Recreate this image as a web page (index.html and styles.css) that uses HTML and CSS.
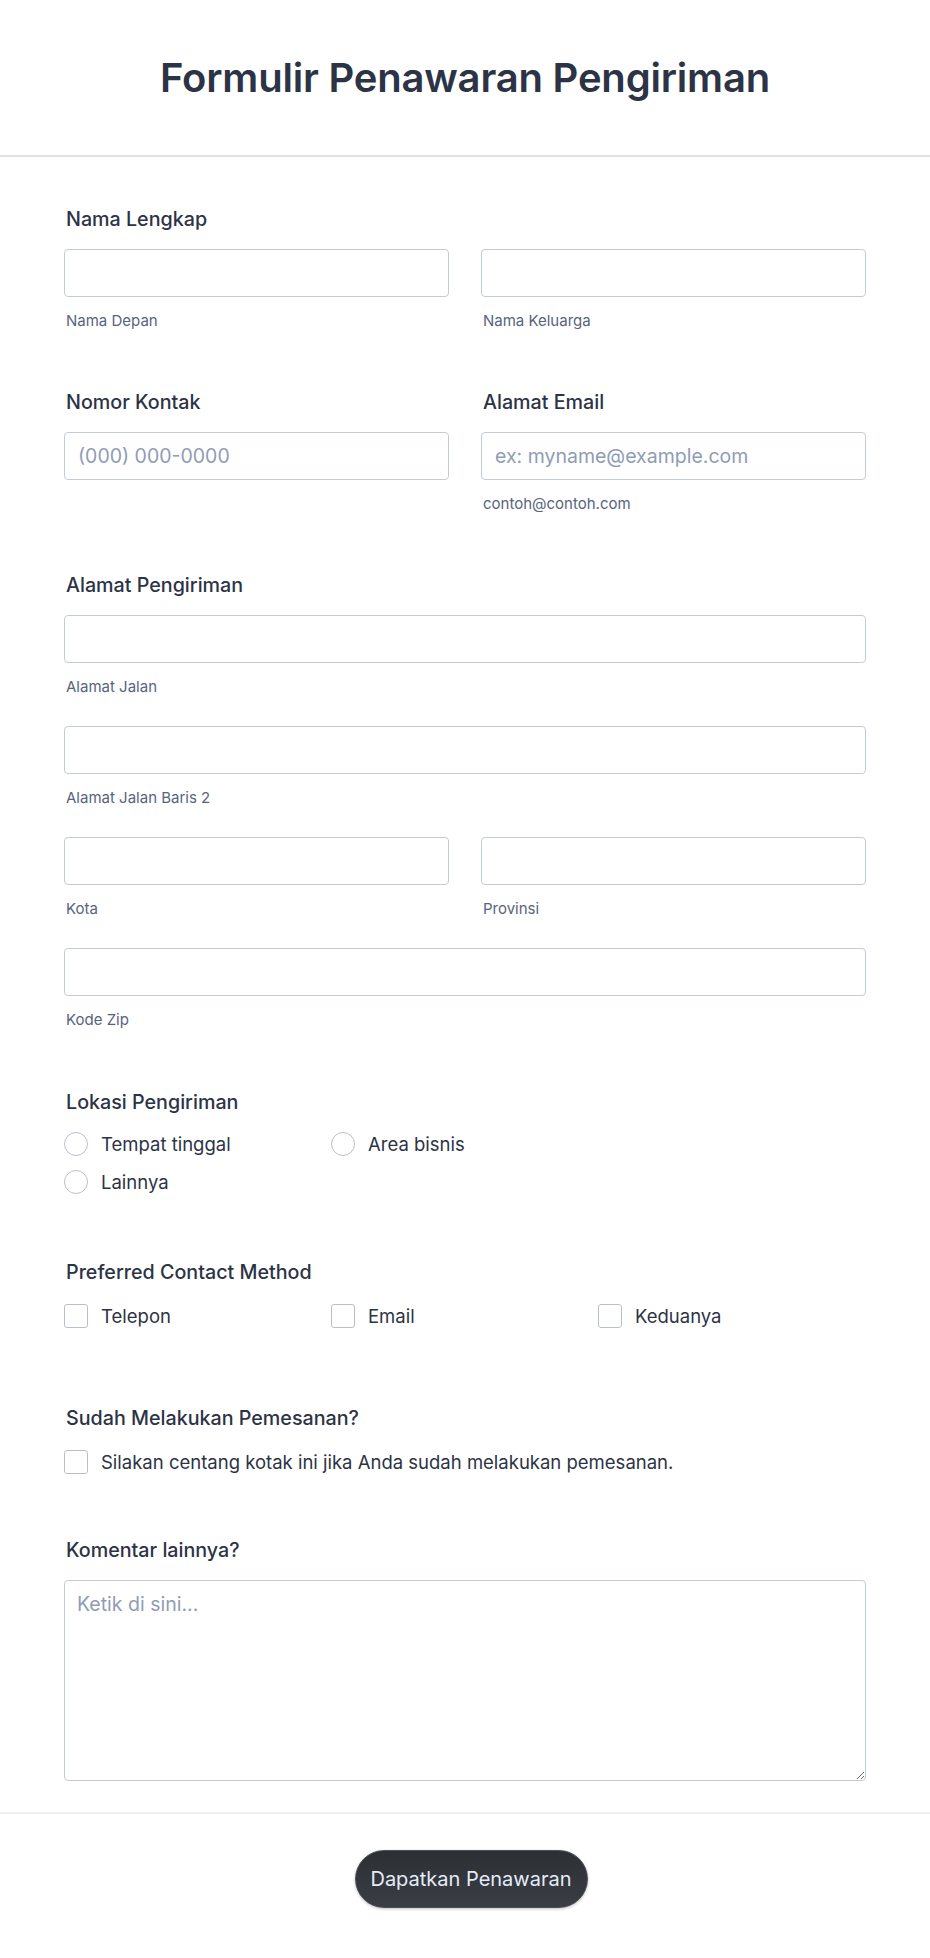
FILE: index.html
```html
<!DOCTYPE html>
<html lang="id">
<head>
<meta charset="utf-8">
<title>Formulir Penawaran Pengiriman</title>
<link rel="stylesheet" href="styles.css">
</head>
<body>
<header class="header">
  <h1 class="title">Formulir Penawaran Pengiriman</h1>
</header>
<form class="form">
  <div class="field">
    <div class="label">Nama Lengkap</div>
    <div class="cols">
      <div class="col">
        <input class="input" type="text">
        <div class="sublabel">Nama Depan</div>
      </div>
      <div class="col">
        <input class="input" type="text">
        <div class="sublabel">Nama Keluarga</div>
      </div>
    </div>
  </div>

  <div class="field gap-59">
    <div class="cols">
      <div class="col">
        <div class="label">Nomor Kontak</div>
        <input class="input" type="text" placeholder="(000) 000-0000">
      </div>
      <div class="col">
        <div class="label">Alamat Email</div>
        <input class="input" type="text" placeholder="ex: myname@example.com">
        <div class="sublabel">contoh@contoh.com</div>
      </div>
    </div>
  </div>

  <div class="field gap-59">
    <div class="label">Alamat Pengiriman</div>
    <input class="input" type="text">
    <div class="sublabel">Alamat Jalan</div>
    <input class="input next" type="text">
    <div class="sublabel">Alamat Jalan Baris 2</div>
    <div class="cols next">
      <div class="col">
        <input class="input" type="text">
        <div class="sublabel">Kota</div>
      </div>
      <div class="col">
        <input class="input" type="text">
        <div class="sublabel">Provinsi</div>
      </div>
    </div>
    <input class="input next" type="text">
    <div class="sublabel">Kode Zip</div>
  </div>

  <div class="field gap-60">
    <div class="label">Lokasi Pengiriman</div>
    <div class="options two">
      <label class="option"><span class="radio"></span>Tempat tinggal</label>
      <label class="option"><span class="radio"></span>Area bisnis</label>
      <label class="option"><span class="radio"></span>Lainnya</label>
    </div>
  </div>

  <div class="field gap-66">
    <div class="label">Preferred Contact Method</div>
    <div class="options">
      <label class="option"><span class="check"></span>Telepon</label>
      <label class="option"><span class="check"></span>Email</label>
      <label class="option"><span class="check"></span>Keduanya</label>
    </div>
  </div>

  <div class="field gap-78">
    <div class="label">Sudah Melakukan Pemesanan?</div>
    <div class="options single">
      <label class="option"><span class="check"></span>Silakan centang kotak ini jika Anda sudah melakukan pemesanan.</label>
    </div>
  </div>

  <div class="field gap-64">
    <div class="label">Komentar lainnya?</div>
    <textarea class="textarea" placeholder="Ketik di sini..."></textarea>
  </div>
</form>
<footer class="footer">
  <button class="submit" type="button">Dapatkan Penawaran</button>
</footer>
</body>
</html>
```

FILE: styles.css
```css
* { box-sizing: border-box; }

body {
  margin: 0;
  background: #ffffff;
  font-family: Inter, "Noto Sans", "Liberation Sans", sans-serif;
  color: #2c3345;
}

.header {
  height: 157px;
  border-bottom: 2px solid #dfe1e8;
  display: flex;
  align-items: center;
  justify-content: center;
}

.title {
  margin: 0;
  font-size: 40px;
  font-weight: 600;
  line-height: 48px;
  color: #2c3345;
  letter-spacing: -0.2px;
}

.form {
  padding: 50px 64px 31px;
}

.field.gap-59 { margin-top: 59px; }
.field.gap-60 { margin-top: 60px; }
.field.gap-64 { margin-top: 64px; }
.field.gap-66 { margin-top: 66px; }
.field.gap-78 { margin-top: 78px; }

.label {
  font-size: 19.7px;
  line-height: 24px;
  font-weight: 500;
  color: #2c3345;
  margin-bottom: 18px;
  padding-left: 2px;
}

.cols {
  display: grid;
  grid-template-columns: 1fr 1fr;
  column-gap: 32px;
}

.col { min-width: 0; }

.input {
  display: block;
  width: 100%;
  height: 48px;
  border: 1px solid #c3cad8;
  border-radius: 4px;
  padding: 0 13px;
  font-family: inherit;
  font-size: 19.5px;
  color: #2c3345;
  background: #fff;
  outline: none;
}

.input::placeholder,
.textarea::placeholder {
  color: #8f9cb4;
}

.next { margin-top: 29px; }

.sublabel {
  margin-top: 14px;
  font-size: 15px;
  line-height: 20px;
  color: #57647e;
  padding-left: 2px;
}

.options {
  display: grid;
  grid-template-columns: 267px 267px 267px;
  row-gap: 14px;
  padding-top: 2px;
}

.options.two {
  grid-template-columns: 267px 267px;
  padding-top: 0;
}

.options.single { grid-template-columns: 1fr; }

.option {
  display: flex;
  align-items: center;
  height: 24px;
  font-size: 18.5px;
  line-height: 24px;
  color: #2c3345;
}

.radio {
  width: 24px;
  height: 24px;
  border: 1px solid #b9bfcc;
  border-radius: 50%;
  margin-right: 13px;
  flex: none;
  background: #fff;
}

.check {
  width: 24px;
  height: 24px;
  border: 1px solid #b9bfcc;
  border-radius: 3px;
  margin-right: 13px;
  flex: none;
  background: #fff;
}

.textarea {
  display: block;
  width: 100%;
  height: 201px;
  margin-top: 16px;
  border: 1px solid #c3cad8;
  border-radius: 4px;
  padding: 11px 12px;
  font-family: inherit;
  font-size: 19.5px;
  line-height: 24px;
  color: #2c3345;
  resize: both;
  outline: none;
}

.footer {
  border-top: 2px solid #eef0f4;
  display: flex;
  justify-content: center;
  padding: 36px 0 0 12px;
  height: 147px;
}

.submit {
  width: 233px;
  height: 58px;
  border-radius: 29px;
  border: 1px solid #4b4f57;
  background: linear-gradient(#2c2f34, #3a3d43);
  color: #e4ecf7;
  font-family: inherit;
  font-size: 20px;
  font-weight: 400;
  box-shadow: 0 1px 3px rgba(0, 0, 0, 0.25);
  cursor: pointer;
}
```
